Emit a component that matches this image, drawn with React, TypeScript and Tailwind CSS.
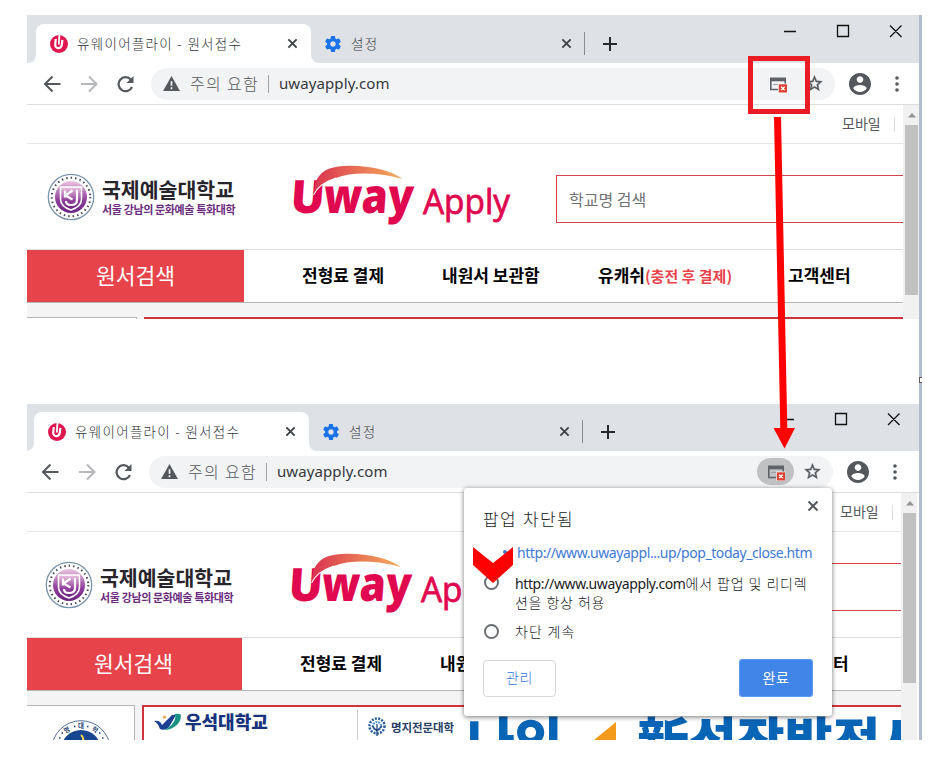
import React from 'react';
import clsx from 'clsx';

const sans = "font-['Noto_Sans','Noto_Sans_CJK_KR',sans-serif]";
const korean = "font-['Noto_Sans_CJK_KR',sans-serif]";

const CloseIcon = ({ className }: { className?: string }) => (
  <svg viewBox="0 0 12 12" className={className} fill="none" stroke="currentColor" strokeWidth="2">
    <path d="M1.5 1.5l9 9M10.5 1.5l-9 9" />
  </svg>
);

const UwayFavicon = () => (
  <svg viewBox="0 0 18 18" className="h-[18px] w-[18px] shrink-0">
    <circle cx="9" cy="9" r="9" fill="#e0164f" />
    <path d="M5.8 4L5.2 9.4C4.9 14.2 11.2 14.4 11.8 9.6L12.4 4.8" fill="none" stroke="#fff" strokeWidth="2.2" />
    <path d="M9.4 0L8.8 9.5" stroke="#fff" strokeWidth="1.8" />
  </svg>
);

const GearIcon = () => (
  <svg viewBox="2 2 20 20" className="h-4 w-4 shrink-0" fill="#1a73e8">
    <path d="M19.43 12.98c.04-.32.07-.64.07-.98s-.03-.66-.07-.98l2.11-1.65c.19-.15.24-.42.12-.64l-2-3.46c-.12-.22-.39-.3-.61-.22l-2.49 1c-.52-.4-1.08-.73-1.69-.98l-.38-2.65A.488.488 0 0014 2h-4c-.25 0-.46.18-.49.42l-.38 2.65c-.61.25-1.17.59-1.69.98l-2.49-1c-.23-.09-.49 0-.61.22l-2 3.46c-.13.22-.07.49.12.64l2.11 1.65c-.04.32-.07.65-.07.98s.03.66.07.98l-2.11 1.65c-.19.15-.24.42-.12.64l2 3.46c.12.22.39.3.61.22l2.49-1c.52.4 1.08.73 1.69.98l.38 2.65c.03.24.24.42.49.42h4c.25 0 .46-.18.49-.42l.38-2.65c.61-.25 1.17-.59 1.69-.98l2.49 1c.23.09.49 0 .61-.22l2-3.46c.12-.22.07-.49-.12-.64l-2.11-1.65zM12 15.5c-1.93 0-3.5-1.57-3.5-3.5s1.57-3.5 3.5-3.5 3.5 1.57 3.5 3.5-1.57 3.5-3.5 3.5z" />
  </svg>
);

const PopupBlockedIcon = () => (
  <svg viewBox="0 0 18 16" className="h-4 w-[18px] shrink-0">
    <path d="M1.8 1.5h14.4v11H1.8z" fill="none" stroke="#5f6368" strokeWidth="1.6" />
    <path d="M1 .7h16v3.6H1z" fill="#5f6368" />
    <path d="M4 7.5h5" stroke="#9aa0a6" strokeWidth="1" />
    <path d="M9 6.5h9V16H9z" fill="#f1f3f4" />
    <path d="M9.8 7.3h8.2v8.2H9.8z" fill="#db4437" />
    <path d="M12.2 9.7l3.4 3.4M15.6 9.7l-3.4 3.4" stroke="#fff" strokeWidth="1.3" />
  </svg>
);

const TabStrip = () => (
  <div className="h-12 bg-[#dee1e6]">
    <div className="flex w-[892px]">
      <div className="mt-[9px] flex h-[39px] w-[284px] items-end">
        <svg viewBox="0 0 9 9" className="h-[9px] w-[9px] shrink-0" fill="#fff">
          <path d="M9 0v9H0Q9 9 9 0z" />
        </svg>
        <div className="flex h-[39px] w-[275px] shrink-0 items-center rounded-t-lg bg-white pl-[14px]">
          <UwayFavicon />
          <span className={clsx(korean, '-mt-px ml-[9px] w-[210px] whitespace-nowrap text-[13.5px] font-light tracking-[1.3px] text-[#2f3236]')}>
            유웨이어플라이 - 원서접수
          </span>
          <CloseIcon className="h-[11px] w-[11px] text-[#3c4043]" />
        </div>
        <svg viewBox="0 0 9 9" className="h-[9px] w-[9px] shrink-0" fill="#fff">
          <path d="M0 0v9H9Q0 9 0 0z" />
        </svg>
      </div>
      <div className="mt-[9px] flex h-[39px] w-[464px] items-center pl-[14px]">
        <GearIcon />
        <span className={clsx(korean, '-mt-px ml-[10px] w-[210px] text-[13.5px] font-light tracking-[1.3px] text-[#3c4043]')}>설정</span>
        <CloseIcon className="h-[11px] w-[11px] text-[#3c4043]" />
        <span className="ml-[12px] h-[23px] w-px bg-[#888c91]" />
        <svg viewBox="0 0 14 14" className="ml-[18px] h-[14px] w-[14px]" stroke="#26292c" strokeWidth="2">
          <path d="M7 0v14M0 7h14" />
        </svg>
      </div>
      <svg viewBox="0 0 120 14" className="ml-[8px] mt-[9px] h-[14px] w-[120px]" fill="none" stroke="#111" strokeWidth="1.3">
        <path d="M1 7.5h12M54.5 1.5h11v11h-11zM107 1.5l11.5 11.5M118.5 1.5L107 13" />
      </svg>
    </div>
  </div>
);

const Toolbar = ({ active }: { active?: boolean }) => (
  <div className="h-[42px] border-b border-[#dcdddf] bg-white">
    <div className="flex h-[41px] w-[892px] items-center">
      <svg viewBox="0 0 92 18" className="ml-[16px] h-[18px] w-[92px] shrink-0" fill="none" strokeWidth="2">
        <path d="M17.5 9H2.5M9.5 1.5L2 9l7.5 7.5" stroke="#54585d" />
        <path d="M38 9h15M46 1.5L53.5 9 46 16.5" stroke="#b5b7ba" />
        <path d="M87.8 4.5A7 7 0 1 0 89 12" stroke="#54585d" strokeWidth="2.2" />
        <path d="M90.5 1v7h-7z" fill="#54585d" stroke="none" />
      </svg>
      <div className="ml-[16px] flex h-8 w-[684px] items-center rounded-full bg-[#f1f3f4] pl-[12px]">
        <svg viewBox="0 0 18 16" className="h-[15px] w-[17px]">
          <path d="M9 0l9 16H0z" fill="#54585d" />
          <path d="M9 5.5v5M9 12v2" stroke="#fff" strokeWidth="1.7" />
        </svg>
        <span className={clsx(korean, '-mt-px ml-[10px] w-[78px] whitespace-nowrap text-[16px] font-light tracking-[1.3px] text-[#54585d]')}>주의 요함</span>
        <span className="h-[18px] w-px bg-[#9fa2a5]" />
        <span className={clsx(sans, 'ml-[10px] w-[480px] text-[15px] tracking-[0.1px] text-[#35383c]')}>uwayapply.com</span>
        <span className={clsx('flex h-[27px] w-[37px] items-center justify-center rounded-full pt-[3px]', active && 'bg-[#bfc1c3]')}>
          <PopupBlockedIcon />
        </span>
        <svg viewBox="0 0 24 24" className="ml-[9px] h-[19px] w-[19px]" fill="#54585d" stroke="#54585d" strokeWidth="0.5">
          <path d="M22 9.24l-7.19-.62L12 2 9.19 8.63 2 9.24l5.46 4.73L5.82 21 12 17.27 18.18 21l-1.63-7.03L22 9.24zM12 15.4l-3.76 2.27 1-4.28-3.32-2.88 4.38-.38L12 6.1l1.71 4.04 4.38.38-3.32 2.88 1 4.28L12 15.4z" />
        </svg>
      </div>
      <svg viewBox="2 2 20 20" className="ml-[14px] h-[22px] w-[22px]" fill="#54585d">
        <path d="M12 2C6.48 2 2 6.48 2 12s4.48 10 10 10 10-4.48 10-10S17.52 2 12 2zm0 3c1.66 0 3 1.34 3 3s-1.34 3-3 3-3-1.34-3-3 1.34-3 3-3zm0 14.2c-2.5 0-4.71-1.28-6-3.22.03-1.99 4-3.08 6-3.08 1.99 0 5.97 1.09 6 3.08-1.29 1.94-3.5 3.22-6 3.22z" />
      </svg>
      <svg viewBox="0 0 4 16" className="ml-[24px] h-4 w-1" fill="#54585d">
        <circle cx="2" cy="2" r="1.8" />
        <circle cx="2" cy="8" r="1.8" />
        <circle cx="2" cy="14" r="1.8" />
      </svg>
    </div>
  </div>
);

const KookjeEmblem = () => (
  <svg viewBox="0 0 48 48" className="h-12 w-12 shrink-0">
    <defs>
      <linearGradient id="kj" x1="0" y1="0" x2="0" y2="1">
        <stop offset="0" stopColor="#ecc6e2" />
        <stop offset="0.6" stopColor="#8f3f9a" />
        <stop offset="1" stopColor="#6a2481" />
      </linearGradient>
    </defs>
    <circle cx="24" cy="24" r="22.7" fill="#fff" stroke="#7793ae" strokeWidth="1.3" />
    <circle cx="24" cy="24" r="19.3" fill="none" stroke="#49465c" strokeWidth="2" strokeDasharray="1.5 3" />
    <circle cx="24" cy="24" r="16" fill="url(#kj)" />
    <path d="M13.5 14h21v12c0 6-4 9-10.5 11-6.5-2-10.5-5-10.5-11z" fill="url(#kj)" stroke="#fff" strokeWidth="1.5" />
    <path d="M18 17.500v7M25.500 17.500l-7 5 7 4M30 17v10q0 5-6 5-5 0-5-4" fill="none" stroke="#fff" strokeWidth="2.200" />
  </svg>
);

const UwayLogo = () => (
  <svg viewBox="0 0 220 64" className="ml-[57px] h-16 w-[220px] shrink-0">
    <defs>
      <linearGradient id="swoosh" x1="0" y1="0" x2="1" y2="0">
        <stop offset="0" stopColor="#d93450" />
        <stop offset="0.55" stopColor="#e97855" />
        <stop offset="1" stopColor="#f3ae5c" />
      </linearGradient>
    </defs>
    <g fill="#e0084f" className="font-['Open_Sans',sans-serif]">
      <text x="0" y="48" transform="skewX(-4)" fontSize="46" fontWeight="800" textLength="34" lengthAdjust="spacingAndGlyphs">U</text>
      <text x="33" y="48" transform="skewX(-4)" fontSize="48" fontWeight="800" textLength="90" lengthAdjust="spacingAndGlyphs">way</text>
      <text x="130" y="49" fontSize="35" fontWeight="500" textLength="87" lengthAdjust="spacingAndGlyphs" stroke="#e0084f" strokeWidth="0.8">Apply</text>
    </g>
    <path d="M21 30C21 11 30 2 51 1C76 0 96 5 110 14C83 7 59 7 43 13C30 17 25 23 21 30Z" fill="url(#swoosh)" />
    <path d="M20.500 30C24 22 31 17 43 13" fill="none" stroke="#fff" strokeWidth="1.100" />
  </svg>
);

const SiteHeader = () => (
  <div className="w-[876px]">
    <div className={clsx(korean, 'flex h-[39px] items-center border-b border-[#e6e6e8] pl-[815px] text-[14px] text-[#55575b]')}>
      <span className="-mt-0.5 w-[52px] whitespace-nowrap">모바일</span>
      <span className="h-[15px] w-px bg-[#dedede]" />
    </div>
    <div className="flex h-[106px] items-center border-b border-[#dedfe0]">
      <div className="flex w-[209px] items-center pl-[20px]">
        <KookjeEmblem />
        <div className={clsx(korean, 'ml-[7px] whitespace-nowrap font-bold')}>
          <div className="text-[20.5px] leading-[24px] text-[#28242b]">국제예술대학교</div>
          <div className="text-[11px] leading-[16px] tracking-[-0.37px] text-[#6b2c7e]">서울 강남의 문화예술 특화대학</div>
        </div>
      </div>
      <UwayLogo />
      <div className={clsx(korean, 'ml-[43px] mt-[5px] flex h-[48px] w-[347px] shrink-0 items-center border border-r-0 border-[#d5444c] pl-[12px] text-[16px] text-[#707174]')}>
        학교명 검색
      </div>
    </div>
    <div className={clsx(korean, 'flex h-[53px] items-center border-b border-[#b4b5b7] bg-white font-bold text-black')}>
      <span className="flex h-[52px] w-[217px] shrink-0 items-center justify-center bg-[#e7434b] pb-px text-[21.5px] font-normal text-white">원서검색</span>
      <span className="-mt-0.5 ml-[58px] w-[140px] shrink-0 whitespace-nowrap text-[17px]">전형료 결제</span>
      <span className="-mt-0.5 w-[156px] shrink-0 whitespace-nowrap text-[17px]">내원서 보관함</span>
      <span className="-mt-0.5 w-[190px] shrink-0 whitespace-nowrap text-[17px]">
        유캐쉬<span className="text-[15px] text-[#e7434b]">(충전 후 결제)</span>
      </span>
      <span className="-mt-0.5 whitespace-nowrap text-[17px]">고객센터</span>
    </div>
  </div>
);

const SiteBanner = () => (
  <div className="flex h-[60px] w-[876px] bg-[#f4f4f5] pt-[14px]">
    <div className="h-[80px] w-[110px] shrink-0 overflow-hidden border-r border-t border-[#b4b5b7] bg-white">
      <svg viewBox="0 0 60 60" className="ml-[26px] mt-[14px] h-[60px] w-[60px]">
        <circle cx="30" cy="30" r="29.3" fill="#fff" stroke="#56719c" strokeWidth="1" />
        <circle cx="30" cy="30" r="20" fill="#174690" />
        <path d="M30 15q4 3 1 8" fill="none" stroke="#f2d84a" strokeWidth="2" />
        <g className="font-['Noto_Sans_CJK_KR',sans-serif]" fontSize="6.5" fontWeight="700" fill="#263f73" textAnchor="middle">
          <text x="17" y="12" transform="rotate(-28 17 12)">명</text>
          <text x="30" y="8">대</text>
          <text x="43" y="12" transform="rotate(28 43 12)">학</text>
        </g>
        <path d="M23 6.5h1.500M36 6.5h1.500M8 18h1.5M51 18h1.5M10.500 13h1.500M48 13h1.500" stroke="#263f73" strokeWidth="1.3" />
      </svg>
    </div>
    <div className="ml-[7px] flex h-[80px] w-[759px] shrink-0 overflow-hidden border-l-2 border-t-2 border-[#cf343e] bg-white">
      <div className={clsx(korean, 'mt-[3px] flex h-8 w-[214px] shrink-0 border-r border-[#c9cacc] pl-[10px]')}>
        <svg viewBox="0 0 28 18" className="mt-[3px] h-[18px] w-7">
          <path d="M0 8q6-1 8 4L18 2h4l-7 12q-4 4-9 2-2-6-6-8z" fill="#1b3f91" />
          <path d="M20 1q5-1 7 1 0 8-7 12-4 3-10 3 9-4 11-11 1-4-1-5z" fill="#199184" />
          <circle cx="10.5" cy="4" r="1.5" fill="#f39a3b" />
        </svg>
        <span className="ml-[3px] whitespace-nowrap text-[18px] font-black leading-[23px] text-[#16337c]">우석대학교</span>
      </div>
      <svg viewBox="0 0 20 20" className="ml-[9px] mt-[10px] h-5 w-5 shrink-0" fill="none">
        <circle cx="10" cy="9" r="7.5" stroke="#285e9b" strokeWidth="2.5" strokeDasharray="2 1.3" />
        <circle cx="10" cy="9" r="4" stroke="#4e8fc5" strokeWidth="2.2" strokeDasharray="1.8 1" />
        <path d="M10 7v12M10 14L5 9M10 14l5-5" stroke="#24477b" strokeWidth="1.3" />
      </svg>
      <span className={clsx(korean, 'ml-[4px] mt-[10px] w-[75px] shrink-0 whitespace-nowrap text-[11.5px] font-bold leading-[20px] tracking-[-0.1px] text-[#293f68]')}>명지전문대학</span>
      <div className={clsx(korean, 'mt-[2px] flex whitespace-nowrap text-[52px] font-black leading-[60px] text-[#0864b5]')}>
        <span className="ml-px w-[127px]">나인</span>
        <svg viewBox="0 0 22 18" className="mt-[13px] h-[18px] w-[22px]">
          <path d="M22 0v18H0z" fill="#f49a1a" />
        </svg>
        <span className="ml-[21px]">新성장발전사</span>
      </div>
    </div>
  </div>
);

const Scrollbar = () => (
  <div className="h-[260px] w-4 shrink-0 bg-[#f1f1f1]">
    <svg viewBox="0 0 16 20" className="h-5 w-4" fill="#929396">
      <path d="M5 12.5L9 8l4 4.5z" />
    </svg>
    <div className="ml-[2px] h-[170px] w-[13px] bg-[#c1c1c1]" />
  </div>
);

const BrowserWindow = ({ active }: { active?: boolean }) => (
  <div className="bg-white">
    <TabStrip />
    <Toolbar active={active} />
    <div className="flex">
      <div className="w-[876px] shrink-0">
        <SiteHeader />
        <SiteBanner />
      </div>
      <Scrollbar />
    </div>
  </div>
);

const PopupDialog = () => (
  <div className={clsx(sans, 'absolute left-[464px] top-[488px] h-[228px] w-[368px] rounded-[3px] bg-white pl-[19px] pt-[12px] font-light text-[#202124] shadow-[0_1px_5px_rgba(0,0,0,0.55)]')}>
    <div className="flex items-start">
      <h2 className="mt-[8px] w-[324px] text-[17px] font-light leading-6 tracking-[1.4px]">팝업 차단됨</h2>
      <CloseIcon className="h-[12px] w-[12px] text-[#54585d]" />
    </div>
    <div className="mt-[10px] flex h-5 items-center text-[14px] text-[#4179d6]">
      <span className="ml-[20px] mr-[10px] h-1 w-1 rounded-full bg-current" />
      <a className="whitespace-nowrap font-normal tracking-[-0.43px]">http://www.uwayappl...up/pop_today_close.htm</a>
    </div>
    <label className="mt-[12px] flex items-start text-[14px] leading-[19px]">
      <span className="ml-px mr-[16px] mt-px h-[15px] w-[15px] shrink-0 rounded-full border-2 border-[#6a6d71]" />
      <span className="whitespace-nowrap tracking-[0.7px]">
        <span className="font-normal tracking-[-0.38px]">http://www.uwayapply.com</span>에서 팝업 및 리디렉
        <br />
        션을 항상 허용
      </span>
    </label>
    <label className="mt-[10px] flex items-center text-[14px] leading-[19px] tracking-[1px]">
      <span className="ml-px mr-[16px] h-[15px] w-[15px] rounded-full border-2 border-[#6a6d71]" />
      차단 계속
    </label>
    <div className="mt-[18px] flex w-[330px] justify-between text-[14px]">
      <button className="mt-px h-[37px] w-[73px] rounded border border-[#d5d7da] pb-0.5 tracking-[0.5px] text-[#3472dc]">관리</button>
      <button className="h-[38px] w-[74px] rounded-[3px] border border-[#5b9bf4] bg-[#4285e8] pb-0.5 font-normal tracking-[0.5px] text-white">완료</button>
    </div>
  </div>
);

const Annotations = () => (
  <>
    <div className="absolute left-[748px] top-[56px] h-[58px] w-[62px] border-[5.5px] border-[#ec1c24]" />
    <svg viewBox="0 0 24 334" className="absolute left-[773px] top-[115px] h-[334px] w-6" fill="#fe0000">
      <path d="M1 2h7l6.3 311h7.7L11.5 333.5.5 313H7.3z" />
    </svg>
    <svg viewBox="0 0 40 36" className="absolute left-[473px] top-[547px] h-9 w-10" fill="#fe0000">
      <path d="M0 0l20 16L40 0v18L20 36 0 18z" />
    </svg>
    <span className="absolute left-[919px] top-[377px] h-[6px] w-[3px] border border-r-0 border-[#5c5c5c] bg-white" />
  </>
);

const App: React.FC = () => {
  return (
    <div className="relative h-[773px] w-[947px] overflow-hidden bg-white">
      <div className="flex pl-[27px] pt-[15px]">
        <div className="w-[892px]">
          <div className="h-[304px] overflow-hidden">
            <BrowserWindow />
          </div>
          <div className="mt-[85px] h-[336px] overflow-hidden">
            <div className="-ml-[2px] -mt-px">
              <BrowserWindow active />
            </div>
          </div>
        </div>
        <div className="h-[725px] w-[3px] bg-[#b3bccd]" />
      </div>
      <PopupDialog />
      <Annotations />
    </div>
  );
};

export default App;
